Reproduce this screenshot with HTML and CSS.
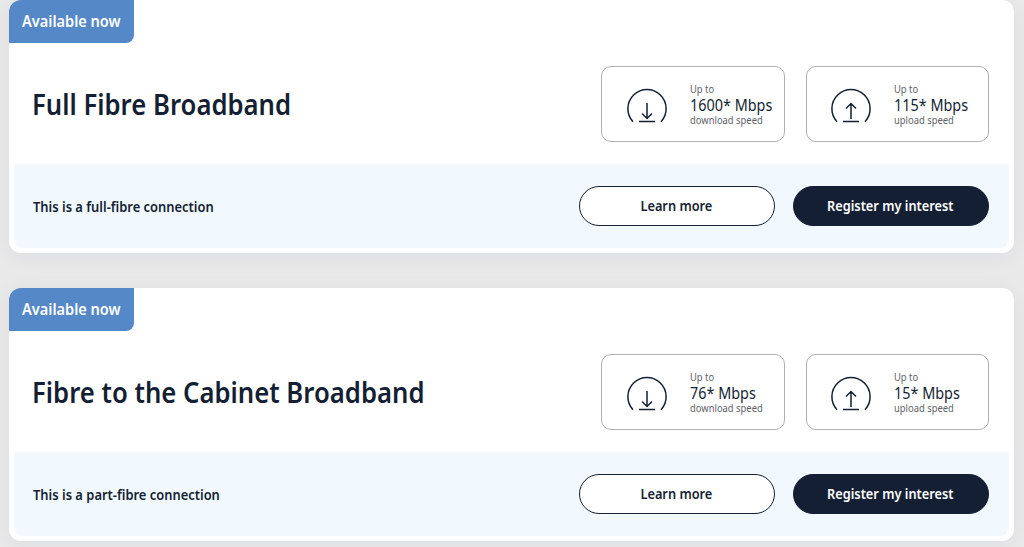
FILE: index.html
```html
<!DOCTYPE html>
<html lang="en">
<head>
    <meta charset="UTF-8">
    <title>Broadband availability</title>
    <link rel="stylesheet" href="styles.css">
</head>
<body>
    <div class="results">
        <div class="card">
            <div class="badge"><span class="badge-text">Available now</span></div>
            <div class="card-main">
                <h2 class="title">Full Fibre Broadband</h2>
                <div class="speeds">
                    <div class="speed">
                        <svg class="speed-icon" width="42" height="36" viewBox="0 0 42 36">
                            <path d="M7 33.7A19.1 19.1 0 1 1 35 33.7M13 33.5H29M21 15V30.5M16 25.5L21 30.5L26 25.5"/>
                        </svg>
                        <div class="speed-text">
                            <div class="small">Up to</div>
                            <div class="value">1600* Mbps</div>
                            <div class="small">download speed</div>
                        </div>
                    </div>
                    <div class="speed">
                        <svg class="speed-icon" width="42" height="36" viewBox="0 0 42 36">
                            <path d="M7 33.7A19.1 19.1 0 1 1 35 33.7M13 33.5H29M21 31V15.5M16 20.5L21 15.5L26 20.5"/>
                        </svg>
                        <div class="speed-text">
                            <div class="small">Up to</div>
                            <div class="value">115* Mbps</div>
                            <div class="small">upload speed</div>
                        </div>
                    </div>
                </div>
            </div>
            <div class="card-footer">
                <p class="note">This is a full-fibre connection</p>
                <div class="buttons">
                    <a class="btn btn-outline"><span class="btn-text">Learn more</span></a>
                    <a class="btn btn-dark"><span class="btn-text">Register my interest</span></a>
                </div>
            </div>
        </div>

        <div class="card">
            <div class="badge"><span class="badge-text">Available now</span></div>
            <div class="card-main">
                <h2 class="title">Fibre to the Cabinet Broadband</h2>
                <div class="speeds">
                    <div class="speed">
                        <svg class="speed-icon" width="42" height="36" viewBox="0 0 42 36">
                            <path d="M7 33.7A19.1 19.1 0 1 1 35 33.7M13 33.5H29M21 15V30.5M16 25.5L21 30.5L26 25.5"/>
                        </svg>
                        <div class="speed-text">
                            <div class="small">Up to</div>
                            <div class="value">76* Mbps</div>
                            <div class="small">download speed</div>
                        </div>
                    </div>
                    <div class="speed">
                        <svg class="speed-icon" width="42" height="36" viewBox="0 0 42 36">
                            <path d="M7 33.7A19.1 19.1 0 1 1 35 33.7M13 33.5H29M21 31V15.5M16 20.5L21 15.5L26 20.5"/>
                        </svg>
                        <div class="speed-text">
                            <div class="small">Up to</div>
                            <div class="value">15* Mbps</div>
                            <div class="small">upload speed</div>
                        </div>
                    </div>
                </div>
            </div>
            <div class="card-footer">
                <p class="note">This is a part-fibre connection</p>
                <div class="buttons">
                    <a class="btn btn-outline"><span class="btn-text">Learn more</span></a>
                    <a class="btn btn-dark"><span class="btn-text">Register my interest</span></a>
                </div>
            </div>
        </div>
    </div>
</body>
</html>
```
FILE: styles.css
```css
* {
    box-sizing: border-box;
}

body {
    margin: 0;
    height: 547px;
    overflow: hidden;
    background: #e9e9ea;
    color: #141f33;
    font-family: 'Noto Sans', 'Open Sans', sans-serif;
}

.results {
    display: flex;
    flex-direction: column;
    gap: 35px;
    padding: 0 10.5px 0 9px;
}

.card {
    display: flex;
    flex-direction: column;
    flex-shrink: 0;
    height: 253px;
    padding-bottom: 5px;
    background: #fff;
    border-radius: 12px;
    box-shadow: 0 4px 22px rgba(20, 31, 51, 0.05);
}

/* Slightly narrowed lettering */
.badge-text,
.title,
.small,
.value,
.note {
    transform: scaleX(0.91);
    transform-origin: left center;
}

.badge {
    display: flex;
    width: 125px;
    height: 43px;
    padding-left: 13px;
    background: #5488c7;
    border-radius: 12px 0 8px 0;
    color: #fff;
    font-size: 16px;
    font-weight: 600;
    line-height: 43px;
    white-space: nowrap;
}

.card-main {
    display: flex;
    justify-content: space-between;
    height: 121px;
    padding: 23px 24.5px 0 23px;
}

.title {
    margin: 0;
    font-size: 29px;
    font-weight: 600;
    line-height: 76px;
    white-space: nowrap;
    transform: scaleX(0.886);
}

.speeds {
    display: flex;
    gap: 21px;
}

.speed {
    display: flex;
    align-items: center;
    width: 183.5px;
    height: 76px;
    padding-left: 23.5px;
    border: 1px solid #aeb0b4;
    border-radius: 10px;
}

.speed-icon {
    flex-shrink: 0;
    margin-top: 4px;
    fill: none;
    stroke: #141f33;
    stroke-width: 1.5;
}

.speed-text {
    width: 90px;
    margin: 1px 0 0 22px;
    white-space: nowrap;
}

.small {
    color: #5e6066;
    font-size: 10.5px;
    line-height: 14px;
    transform: scaleX(0.895);
}

.value {
    padding-top: 1px;
    font-size: 16px;
    line-height: 16px;
    transform: scaleX(0.9);
}

.card-footer {
    display: flex;
    align-items: center;
    justify-content: space-between;
    height: 84px;
    margin: 0 5px;
    padding: 0 19.5px 0 19px;
    background: #f1f8fe;
    border-radius: 0 0 9px 9px;
}

.note {
    margin: 0;
    font-size: 14px;
    font-weight: 600;
    transform: scaleX(0.923);
}

.buttons {
    display: flex;
    gap: 17.5px;
}

.btn {
    width: 196.5px;
    height: 40px;
    border: 1px solid #141f33;
    border-radius: 20px;
    font-size: 14px;
    font-weight: 600;
    line-height: 38px;
    text-align: center;
}

.btn-text {
    display: inline-block;
    transform: scaleX(0.913);
}

.btn-outline {
    background: #fff;
}

.btn-dark {
    background: #141f33;
    color: #fff;
}
```
